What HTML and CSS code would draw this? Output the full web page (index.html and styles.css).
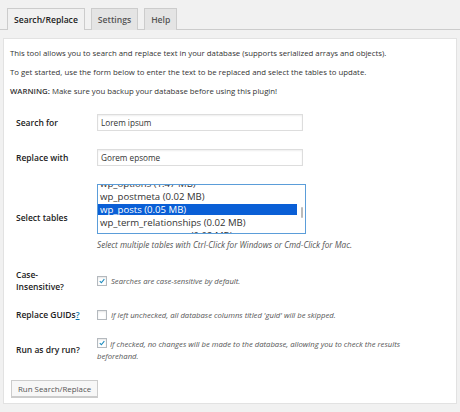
FILE: index.html
```html
<!DOCTYPE html>
<html>
<head>
<meta charset="utf-8">
<link rel="stylesheet" href="styles.css">
</head>
<body>
<div class="wrap">
  <nav class="tabs">
    <span class="tab active">Search/Replace</span>
    <span class="tab">Settings</span>
    <span class="tab">Help</span>
  </nav>
  <div class="panel">
    <p>This tool allows you to search and replace text in your database (supports serialized arrays and objects).</p>
    <p>To get started, use the form below to enter the text to be replaced and select the tables to update.</p>
    <p><strong>WARNING:</strong> Make sure you backup your database before using this plugin!</p>
    <div class="form">
      <div class="row">
        <div class="label">Search for</div>
        <div class="field"><div class="input">Lorem ipsum</div></div>
      </div>
      <div class="row">
        <div class="label">Replace with</div>
        <div class="field"><div class="input">Gorem epsome</div></div>
      </div>
      <div class="row">
        <div class="label">Select tables</div>
        <div class="field">
          <div class="listbox">
            <div class="options">
              <div class="opt">wp_options (1.47 MB)</div>
              <div class="opt">wp_postmeta (0.02 MB)</div>
              <div class="opt sel">wp_posts (0.05 MB)</div>
              <div class="opt">wp_term_relationships (0.02 MB)</div>
              <div class="opt">wp_term_taxonomy (0.02 MB)</div>
            </div>
            <span class="thumb"></span>
          </div>
          <div class="hint">Select multiple tables with Ctrl-Click for Windows or Cmd-Click for Mac.</div>
        </div>
      </div>
      <div class="row">
        <div class="label">Case-<br>Insensitive?</div>
        <div class="field check">
          <span class="cb"><svg viewBox="0 0 10 10"><path d="M2.2 5.2 L4.2 7.2 L7.9 2.6" fill="none" stroke="#1e8cbe" stroke-width="1.4"/></svg></span>
          <span class="desc">Searches are case-sensitive by default.</span>
        </div>
      </div>
      <div class="row guid">
        <div class="label">Replace GUIDs<a class="q">?</a></div>
        <div class="field check">
          <span class="cb"></span>
          <span class="desc">If left unchecked, all database columns titled 'guid' will be skipped.</span>
        </div>
      </div>
      <div class="row">
        <div class="label">Run as dry run?</div>
        <div class="field">
          <span class="desc block"><span class="cb inl"><svg viewBox="0 0 10 10"><path d="M2.2 5.2 L4.2 7.2 L7.9 2.6" fill="none" stroke="#1e8cbe" stroke-width="1.4"/></svg></span> If checked, no changes will be made to the database, allowing you to check the results beforehand.</span>
        </div>
      </div>
    </div>
    <div class="actions"><span class="button">Run Search/Replace</span></div>
  </div>
</div>
</body>
</html>
```
FILE: styles.css
```css
html, body {
  margin: 0;
  padding: 0;
  background: #f1f1f1;
}
body {
  font-family: "Open Sans", "Noto Sans", sans-serif;
  color: #444;
  font-size: 7.8px;
}
.wrap {
  padding: 0 3px 0 3px;
}
.tabs {
  display: flex;
  gap: 6px;
  padding: 8px 0 0 7px;
  border-bottom: 1px solid #ccc;
  height: 21px;
  margin-left: -3px;
  margin-right: -3px;
}
.tab {
  display: flex;
  align-items: center;
  padding: 0 6px;
  height: 22px;
  border: 1px solid #ccc;
  border-bottom: none;
  background: #e4e4e4;
  color: #555;
  font-weight: 600;
  font-size: 8.6px;
  box-sizing: border-box;
}
.tab.active {
  background: #f1f1f1;
  color: #222;
  margin-bottom: -1px;
}
.panel {
  margin-top: 8px;
  background: #fff;
  border: 1px solid #e2e2e2;
  padding: 1px 6px 6px 6px;
}
p {
  margin: 7px 0;
  line-height: 12px;
  color: #333;
}
strong { font-weight: 600; }
.form {
  padding-left: 6px;
  margin-top: 8px;
}
.row {
  display: grid;
  grid-template-columns: 81px 1fr;
  align-items: center;
  padding: 9px 0;
}
.row.guid {
  padding: 7px 0 8px;
}
.label {
  font-weight: 600;
  font-size: 8.5px;
  color: #222;
  line-height: 12px;
}
.q {
  color: #0073aa;
  text-decoration: underline;
}
.input {
  width: 206px;
  height: 17px;
  box-sizing: border-box;
  border: 1px solid #ddd;
  box-shadow: inset 0 1px 2px rgba(0,0,0,0.07);
  padding: 0 3px;
  display: flex;
  align-items: center;
  font-size: 8.2px;
  color: #333;
}
.listbox {
  position: relative;
  width: 209px;
  height: 50px;
  box-sizing: border-box;
  border: 1px solid #5b9dd9;
  overflow: hidden;
  background: #fff;
}
.options {
  margin-top: -7px;
  padding-right: 8px;
}
.opt {
  height: 11px;
  line-height: 11px;
  margin-bottom: 2px;
  font-size: 9.6px;
  padding-left: 2px;
  color: #333;
  white-space: nowrap;
}
.opt.sel {
  background: #0a5fd6;
  color: #fff;
}
.thumb {
  position: absolute;
  right: 2px;
  top: 22px;
  width: 2px;
  height: 11px;
  background: #bbb;
  border-radius: 1px;
}
.hint {
  font-style: italic;
  color: #555;
  font-size: 8.2px;
  line-height: 12px;
  margin-top: 5px;
}
.desc {
  font-style: italic;
  color: #555;
  font-size: 7.7px;
  line-height: 12px;
}
.desc.block {
  display: block;
  max-width: 312px;
}
.field.check {
  display: flex;
  align-items: center;
  gap: 4px;
}
.cb {
  display: inline-block;
  width: 10px;
  height: 10px;
  flex: none;
  box-sizing: border-box;
  border: 1px solid #b4b9be;
  background: #fff;
  box-shadow: inset 0 1px 2px rgba(0,0,0,0.1);
}
.cb svg { display: block; width: 8px; height: 8px; }
.cb.inl { vertical-align: -1px; margin-right: 1px; }
.actions {
  padding: 9px 0 0 1px;
  line-height: 0;
}
.button {
  display: inline-flex;
  align-items: center;
  height: 17px;
  box-sizing: border-box;
  padding: 0 6px;
  border: 1px solid #ccc;
  background: #f7f7f7;
  box-shadow: 0 1px 0 #ccc;
  color: #555;
  font-size: 7.9px;
  line-height: 12px;
}
```
